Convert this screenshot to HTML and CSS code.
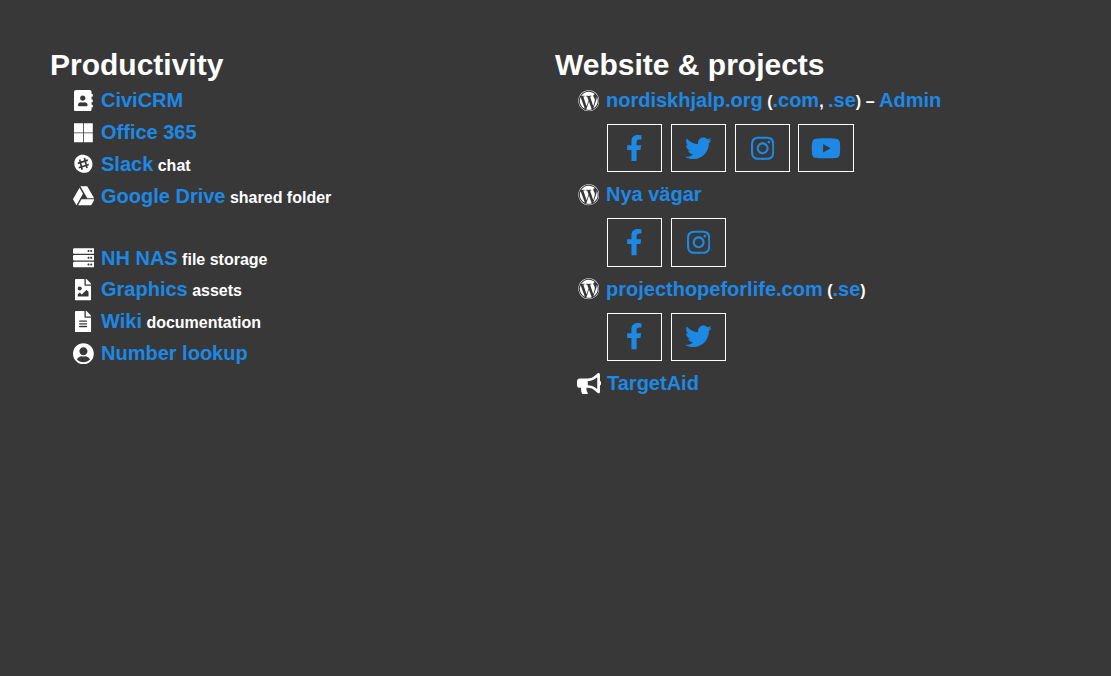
FILE: index.html
```html
<!DOCTYPE html>
<html lang="en">
<head>
<meta charset="utf-8">
<title>Links</title>
<link rel="stylesheet" href="styles.css">
</head>
<body>
<svg class="defs" width="0" height="0" aria-hidden="true">
<defs>
<symbol id="i-book" viewBox="0 0 448 512"><path d="M436 160c6.6 0 12-5.4 12-12v-40c0-6.6-5.4-12-12-12h-20V48c0-26.5-21.5-48-48-48H48C21.5 0 0 21.5 0 48v416c0 26.5 21.5 48 48 48h320c26.5 0 48-21.5 48-48v-48h20c6.6 0 12-5.4 12-12v-40c0-6.6-5.4-12-12-12h-20v-64h20c6.6 0 12-5.4 12-12v-40c0-6.6-5.4-12-12-12h-20v-64h20zm-228-32c35.3 0 64 28.7 64 64s-28.7 64-64 64-64-28.7-64-64 28.7-64 64-64zm112 236.8c0 10.6-10 19.2-22.4 19.2H118.4C106 384 96 375.4 96 364.8v-19.2c0-31.8 30.1-57.6 67.2-57.6h5c12.3 5.1 25.7 8 39.8 8s27.6-2.9 39.8-8h5c37.1 0 67.2 25.8 67.2 57.6v19.2z"/></symbol>
<symbol id="i-win" viewBox="0 0 448 512"><path d="M0 32h214.6v214.6H0V32zm233.4 0H448v214.6H233.4V32zM0 265.4h214.6V480H0V265.4zm233.4 0H448V480H233.4V265.4z"/></symbol>
<symbol id="i-slack" viewBox="0 0 448 512"><path d="M150 46c50-14 130-4 190 36 60 40 98 110 98 176 0 70-26 130-76 172-50 40-120 46-180 30-60-16-120-50-150-110C2 290-2 220 24 160 50 100 100 60 150 46z"/><g class="hash" transform="rotate(-18 224 256)"><path d="M170 130l-18 250M290 130l-18 250M100 205h250M90 310h250"/></g></symbol>
<symbol id="i-drive" viewBox="0 0 512 512"><path d="M339 314.9L175.4 32h161.2l163.6 282.9H339zm-137.5 23.6L120.9 480h310.5L512 338.5H201.5zM154.1 67.4L0 338.5 80.6 480 237 208.8 154.1 67.4z"/></symbol>
<symbol id="i-server" viewBox="0 0 512 512"><path d="M480 160H32c-17.673 0-32-14.327-32-32V64c0-17.673 14.327-32 32-32h448c17.673 0 32 14.327 32 32v64c0 17.673-14.327 32-32 32zm-48-88c-13.255 0-24 10.745-24 24s10.745 24 24 24 24-10.745 24-24-10.745-24-24-24zm-64 0c-13.255 0-24 10.745-24 24s10.745 24 24 24 24-10.745 24-24-10.745-24-24-24zm112 248H32c-17.673 0-32-14.327-32-32v-64c0-17.673 14.327-32 32-32h448c17.673 0 32 14.327 32 32v64c0 17.673-14.327 32-32 32zm-48-88c-13.255 0-24 10.745-24 24s10.745 24 24 24 24-10.745 24-24-10.745-24-24-24zm-64 0c-13.255 0-24 10.745-24 24s10.745 24 24 24 24-10.745 24-24-10.745-24-24-24zm112 248H32c-17.673 0-32-14.327-32-32v-64c0-17.673 14.327-32 32-32h448c17.673 0 32 14.327 32 32v64c0 17.673-14.327 32-32 32zm-48-88c-13.255 0-24 10.745-24 24s10.745 24 24 24 24-10.745 24-24-10.745-24-24-24zm-64 0c-13.255 0-24 10.745-24 24s10.745 24 24 24 24-10.745 24-24-10.745-24-24-24z"/></symbol>
<symbol id="i-fileimg" viewBox="0 0 384 512"><path d="M384 121.941V128H256V0h6.059a24 24 0 0 1 16.97 7.029l97.941 97.941a24.002 24.002 0 0 1 7.03 16.971zM248 160c-13.2 0-24-10.8-24-24V0H24C10.745 0 0 10.745 0 24v464c0 13.255 10.745 24 24 24h336c13.255 0 24-10.745 24-24V160H248zm-135.455 16c26.51 0 48 21.49 48 48s-21.49 48-48 48-48-21.49-48-48 21.491-48 48-48zm208 240h-256l.485-48.485L104.545 328c4.686-4.686 11.799-4.201 16.485.485L160.545 368 264.06 264.485c4.686-4.686 12.284-4.686 16.971 0L320.545 304v112z"/></symbol>
<symbol id="i-file" viewBox="0 0 384 512"><path d="M224 136V0H24C10.7 0 0 10.7 0 24v464c0 13.3 10.7 24 24 24h336c13.3 0 24-10.7 24-24V160H248c-13.2 0-24-10.8-24-24zm64 236c0 6.6-5.4 12-12 12H108c-6.6 0-12-5.4-12-12v-8c0-6.6 5.4-12 12-12h168c6.6 0 12 5.4 12 12v8zm0-64c0 6.6-5.4 12-12 12H108c-6.6 0-12-5.4-12-12v-8c0-6.6 5.4-12 12-12h168c6.6 0 12 5.4 12 12v8zm0-72v8c0 6.6-5.4 12-12 12H108c-6.6 0-12-5.4-12-12v-8c0-6.6 5.4-12 12-12h168c6.6 0 12 5.4 12 12zm96-114.1v6.1H256V0h6.1c6.4 0 12.5 2.5 17 7l97.9 98c4.5 4.5 7 10.6 7 16.9z"/></symbol>
<symbol id="i-user" viewBox="0 0 496 512"><path fill-rule="evenodd" d="M248 8C111 8 0 119 0 256s111 248 248 248 248-111 248-248S385 8 248 8zm0 90c54 0 96 42 96 96s-42 96-96 96-96-42-96-96 42-96 96-96zM92 392c22-44 66-74 112-78 14 4 28 6 44 6s30-2 44-6c46 4 90 34 112 78-36 40-92 62-156 62S128 432 92 392z"/></symbol>
<symbol id="i-wp" viewBox="0 0 512 512"><path d="M61.7 169.4l101.5 278C92.2 413 43.3 340.2 43.3 256c0-30.9 6.6-60.1 18.4-86.6zm337.9 75.9c0-26.3-9.4-44.5-17.5-58.7-10.8-17.5-20.9-32.4-20.9-49.9 0-19.6 14.8-37.8 35.7-37.8.9 0 1.8.1 2.8.2-37.9-34.7-88.3-55.9-143.7-55.9-74.3 0-139.7 38.1-177.8 95.9 5 .2 9.7.3 13.7.3 22.2 0 56.7-2.7 56.7-2.7 11.5-.7 12.8 16.2 1.4 17.5 0 0-11.5 1.3-24.3 2l77.5 230.4L249.8 247l-33.1-90.8c-11.5-.7-22.3-2-22.3-2-11.5-.7-10.1-18.2 1.3-17.5 0 0 35.1 2.7 56 2.7 22.2 0 56.7-2.7 56.7-2.7 11.5-.7 12.8 16.2 1.4 17.5 0 0-11.5 1.3-24.3 2l76.9 228.7 21.2-70.9c9-29.4 16-50.5 16-68.7zm-139.9 29.4l-63.8 185.5c19.1 5.6 39.2 8.7 60.1 8.7 24.8 0 48.5-4.3 70.6-12.1-.6-.9-1.1-1.9-1.5-2.9l-65.4-179.2zm183-120.7c.9 6.8 1.4 14 1.4 21.9 0 21.6-4 45.8-16.2 76.2l-65 187.9C426.2 403 468.7 334.5 468.7 256c0-37-9.4-71.8-26-102.1zM504 256c0 136.8-111.3 248-248 248C119.2 504 8 392.7 8 256 8 119.2 119.2 8 256 8c136.7 0 248 111.2 248 248zm-11.4 0c0-130.5-106.2-236.6-236.6-236.6C125.5 19.4 19.4 125.5 19.4 256S125.6 492.6 256 492.6c130.5 0 236.6-106.1 236.6-236.6z"/></symbol>
<symbol id="i-horn" viewBox="0 0 576 512"><path d="M576 240c0-23.63-12.95-44.04-32-55.12V32.01C544 23.26 537.02 0 512 0c-7.12 0-14.19 2.38-19.98 7.02l-85.03 68.03C364.28 109.19 310.66 128 256 128H64c-35.35 0-64 28.65-64 64v96c0 35.35 28.65 64 64 64h33.7c-1.39 10.48-2.18 21.14-2.18 32 0 39.77 9.26 77.35 25.56 110.94 5.19 10.69 16.52 17.06 28.4 17.06h74.28c26.05 0 41.69-29.84 25.9-50.56-16.4-21.52-26.15-48.36-26.15-77.44 0-11.11 1.62-21.79 4.41-32H256c54.66 0 108.28 18.81 150.98 52.95l85.03 68.03a32.023 32.023 0 0 0 19.98 7.02c24.92 0 32-22.78 32-32V295.13C563.05 284.04 576 263.63 576 240zm-96 141.42l-33.05-26.44C392.95 311.78 325.12 288 256 288v-96c69.12 0 136.95-23.78 190.95-66.98L480 98.58v282.84z"/></symbol>
<symbol id="i-fb" viewBox="0 0 320 512"><path d="M279.14 288l14.22-92.66h-88.91v-60.13c0-25.35 12.42-50.06 52.24-50.06h40.42V6.26S260.43 0 225.36 0c-73.22 0-121.08 44.38-121.08 124.72v70.62H22.89V288h81.39v224h100.17V288z"/></symbol>
<symbol id="i-tw" viewBox="0 0 512 512"><path d="M459.37 151.716c.325 4.548.325 9.097.325 13.645 0 138.72-105.583 298.558-298.558 298.558-59.452 0-114.68-17.219-161.137-47.106 8.447.974 16.568 1.299 25.34 1.299 49.055 0 94.213-16.568 130.274-44.832-46.132-.975-84.792-31.188-98.112-72.772 6.498.974 12.995 1.624 19.818 1.624 9.421 0 18.843-1.3 27.614-3.573-48.081-9.747-84.143-51.98-84.143-102.985v-1.299c13.969 7.797 30.214 12.67 47.431 13.319-28.264-18.843-46.781-51.005-46.781-87.391 0-19.492 5.197-37.36 14.294-52.954 51.655 63.675 129.3 105.258 216.365 109.807-1.624-7.797-2.599-15.918-2.599-24.04 0-57.828 46.782-104.934 104.934-104.934 30.213 0 57.502 12.67 76.67 33.137 23.715-4.548 46.456-13.32 66.599-25.34-7.798 24.366-24.366 44.833-46.132 57.827 21.117-2.273 41.584-8.122 60.426-16.243-14.292 20.791-32.161 39.308-52.628 54.253z"/></symbol>
<symbol id="i-ig" viewBox="0 0 448 512"><path d="M224.1 141c-63.6 0-114.9 51.3-114.9 114.9s51.3 114.9 114.9 114.9S339 319.5 339 255.9 287.7 141 224.1 141zm0 189.6c-41.1 0-74.7-33.5-74.7-74.7s33.5-74.7 74.7-74.7 74.7 33.5 74.7 74.7-33.6 74.7-74.7 74.7zm146.4-194.3c0 14.9-12 26.8-26.8 26.8-14.9 0-26.8-12-26.8-26.8s12-26.8 26.8-26.8 26.8 12 26.8 26.8zm76.1 27.2c-1.7-35.9-9.9-67.7-36.2-93.9-26.2-26.2-58-34.4-93.9-36.2-37-2.1-147.9-2.1-184.9 0-35.8 1.7-67.6 9.9-93.9 36.1s-34.4 58-36.2 93.9c-2.1 37-2.1 147.9 0 184.9 1.7 35.9 9.9 67.7 36.2 93.9s58 34.4 93.9 36.2c37 2.1 147.9 2.1 184.9 0 35.9-1.7 67.7-9.9 93.9-36.2 26.2-26.2 34.4-58 36.2-93.9 2.1-37 2.1-147.8 0-184.8zM398.8 388c-7.8 19.6-22.9 34.7-42.6 42.6-29.5 11.7-99.5 9-132.1 9s-102.7 2.6-132.1-9c-19.6-7.8-34.7-22.9-42.6-42.6-11.7-29.5-9-99.5-9-132.1s-2.6-102.7 9-132.1c7.8-19.6 22.9-34.7 42.6-42.6 29.5-11.7 99.5-9 132.1-9s102.7-2.6 132.1 9c19.6 7.8 34.7 22.9 42.6 42.6 11.7 29.5 9 99.5 9 132.1s2.7 102.7-9 132.1z"/></symbol>
<symbol id="i-yt" viewBox="0 0 576 512"><path d="M549.655 124.083c-6.281-23.65-24.787-42.276-48.284-48.597C458.781 64 288 64 288 64S117.22 64 74.629 75.486c-23.497 6.322-42.003 24.947-48.284 48.597-11.412 42.867-11.412 132.305-11.412 132.305s0 89.438 11.412 132.305c6.281 23.65 24.787 41.5 48.284 47.821C117.22 448 288 448 288 448s170.78 0 213.371-11.486c23.497-6.321 42.003-24.171 48.284-47.821 11.412-42.867 11.412-132.305 11.412-132.305s0-89.438-11.412-132.305zm-317.51 213.508V175.185l142.739 81.205-142.739 81.201z"/></symbol>
</defs>
</svg>
<main class="columns">
<section class="col">
<h2>Productivity</h2>
<ul class="list">
<li class="row"><span class="ic"><svg class="w-448"><use href="#i-book"/></svg></span><span class="txt"><a href="#">CiviCRM</a></span></li>
<li class="row"><span class="ic"><svg class="w-448"><use href="#i-win"/></svg></span><span class="txt"><a href="#">Office 365</a></span></li>
<li class="row"><span class="ic"><svg class="w-448"><use href="#i-slack"/></svg></span><span class="txt"><a href="#">Slack</a><small> chat</small></span></li>
<li class="row"><span class="ic"><svg class="w-512"><use href="#i-drive"/></svg></span><span class="txt"><a href="#">Google Drive</a><small> shared folder</small></span></li>
<li class="spacer"></li>
<li class="row"><span class="ic"><svg class="w-512"><use href="#i-server"/></svg></span><span class="txt"><a href="#">NH NAS</a><small> file storage</small></span></li>
<li class="row"><span class="ic"><svg class="w-384"><use href="#i-fileimg"/></svg></span><span class="txt"><a href="#">Graphics</a><small> assets</small></span></li>
<li class="row"><span class="ic"><svg class="w-384"><use href="#i-file"/></svg></span><span class="txt"><a href="#">Wiki</a><small> documentation</small></span></li>
<li class="row"><span class="ic"><svg class="w-496"><use href="#i-user"/></svg></span><span class="txt"><a href="#">Number lookup</a></span></li>
</ul>
</section>
<section class="col">
<h2>Website &amp; projects</h2>
<ul class="list">
<li class="row"><span class="ic"><svg class="w-512"><use href="#i-wp"/></svg></span><span class="txt"><a href="#">nordiskhjalp.org</a><small> (<a href="#" class="big">.com</a>, <a href="#" class="big">.se</a>) – </small><a href="#">Admin</a></span></li>
<li class="socials">
<a class="box" href="#"><svg class="s-fb"><use href="#i-fb"/></svg></a>
<a class="box" href="#"><svg class="s-tw"><use href="#i-tw"/></svg></a>
<a class="box" href="#"><svg class="s-ig"><use href="#i-ig"/></svg></a>
<a class="box" href="#"><svg class="s-yt"><use href="#i-yt"/></svg></a>
</li>
<li class="row"><span class="ic"><svg class="w-512"><use href="#i-wp"/></svg></span><span class="txt"><a href="#">Nya vägar</a></span></li>
<li class="socials">
<a class="box" href="#"><svg class="s-fb"><use href="#i-fb"/></svg></a>
<a class="box" href="#"><svg class="s-ig"><use href="#i-ig"/></svg></a>
</li>
<li class="row"><span class="ic"><svg class="w-512"><use href="#i-wp"/></svg></span><span class="txt"><a href="#">projecthopeforlife.com</a><small> (<a href="#" class="big">.se</a>)</small></span></li>
<li class="socials">
<a class="box" href="#"><svg class="s-fb"><use href="#i-fb"/></svg></a>
<a class="box" href="#"><svg class="s-tw"><use href="#i-tw"/></svg></a>
</li>
<li class="row"><span class="ic ic-wide"><svg class="w-576"><use href="#i-horn"/></svg></span><span class="txt"><a href="#">TargetAid</a></span></li>
</ul>
</section>
</main>
</body>
</html>
```
FILE: styles.css
```css
* { box-sizing: border-box; }
html, body { margin: 0; height: 100%; }
body {
  background: #383838;
  color: #fff;
  font-family: "Liberation Sans", Arial, sans-serif;
  font-weight: bold;
  font-size: 20px;
}
.defs { position: absolute; }
.columns {
  display: grid;
  grid-template-columns: 505px 1fr;
  padding: 48px 0 0 50px;
}
h2 {
  margin: 0;
  font-size: 30px;
  line-height: 33px;
}
.list {
  list-style: none;
  margin: 0;
  padding: 3.8px 0 0 20px;
}
.row {
  display: flex;
  align-items: center;
  height: 31.8px;
}
.txt { white-space: pre; }
.row a, .big { color: #1e88e5; text-decoration: none; }
.big { font-size: 20px; }
small { font-size: 16px; }
.ic {
  width: 27px;
  margin-right: 4px;
  display: flex;
  justify-content: center;
  flex: none;
}
.ic-wide { width: 28px; }
.ic svg { height: 21.6px; fill: #fff; display: block; }
.hash { fill: none; stroke: #383838; stroke-width: 40; }
.w-384 { width: 16.2px; }
.w-448 { width: 18.9px; }
.w-496 { width: 20.9px; }
.w-512 { width: 21.6px; }
.w-576 { width: 24.3px; }
.spacer { height: 30.2px; }
.socials {
  display: flex;
  gap: 8.6px;
  padding: 7.4px 0 6.7px 32px;
}
.box {
  width: 55.2px;
  height: 48.4px;
  border: 1px solid #fff;
  display: flex;
  align-items: center;
  justify-content: center;
  fill: #1e88e5;
}
.box svg { display: block; height: 26.6px; }
.s-fb { width: 16.6px; }
.s-tw { width: 26.6px; }
.s-ig { width: 23.3px; }
.s-yt { width: 30px; }
```
